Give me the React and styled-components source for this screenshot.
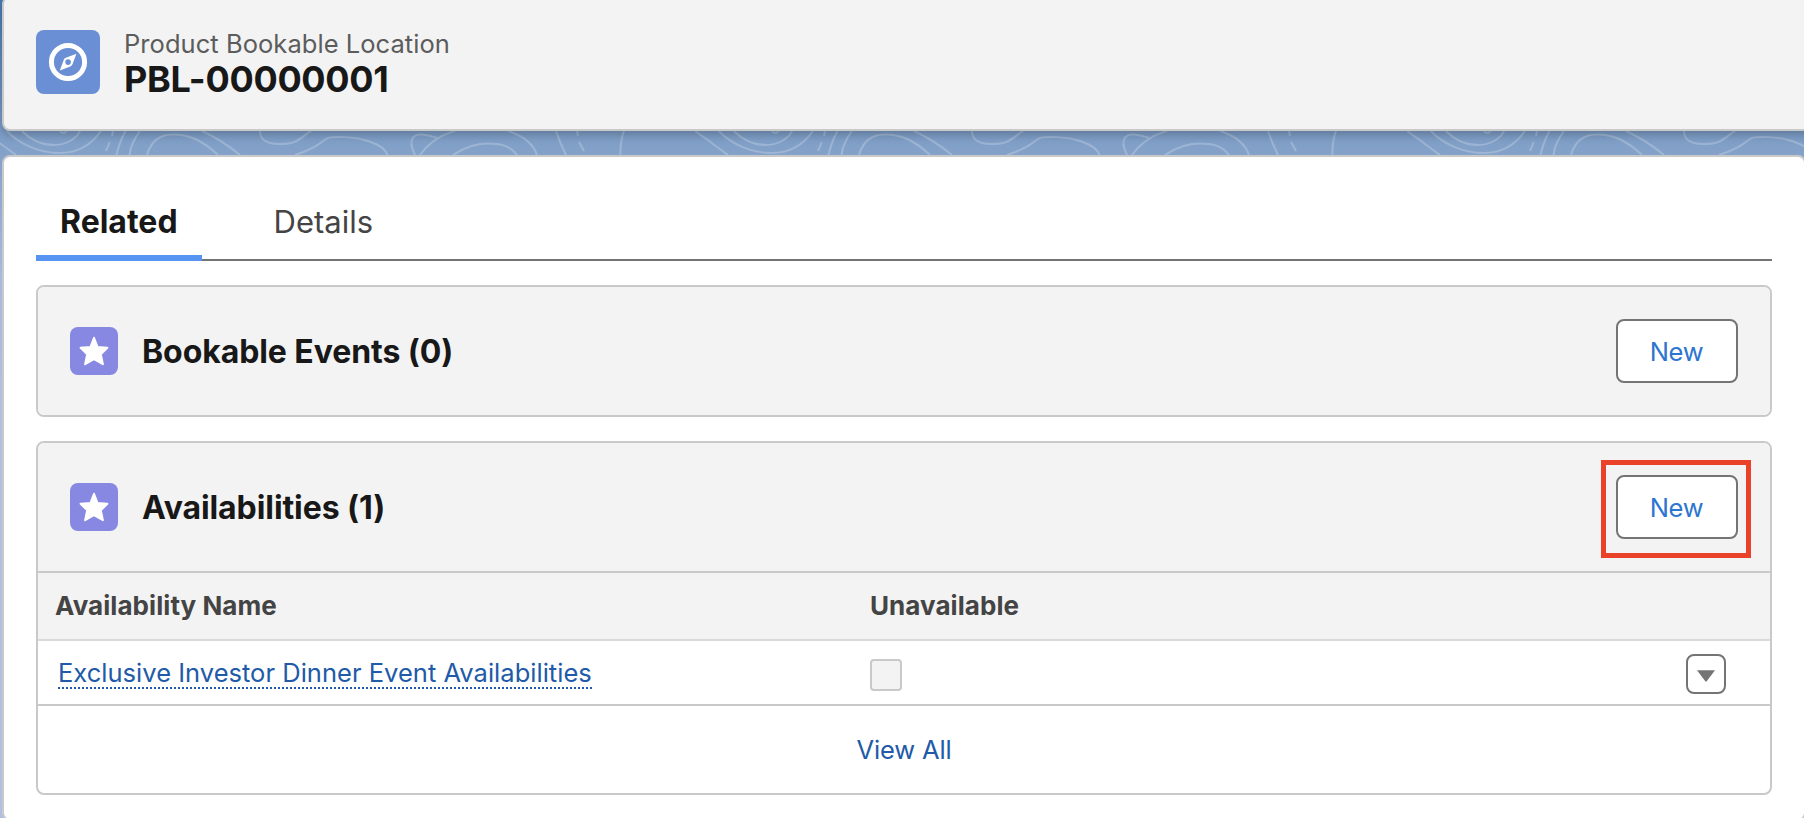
import React from 'react';
import styled, { createGlobalStyle } from 'styled-components';

const relatedLists = [
  { id: 'events', title: 'Bookable Events', records: [] },
  {
    id: 'availabilities',
    title: 'Availabilities',
    highlighted: true,
    records: [{ id: 1, name: 'Exclusive Investor Dinner Event Availabilities' }],
  },
];

const CompassIcon = () => (
  <svg width="64" height="64" viewBox="0 0 64 64" fill="none">
    <circle cx="32" cy="32" r="16.6" stroke="#fff" strokeWidth="5" />
    <path
      fill="#fff"
      fillRule="evenodd"
      d="M40.4 23.8 29.9 27.7Q28.3 28.3 27.7 29.9L23.8 40.4 34.3 36.5Q35.9 35.9 36.5 34.3ZM32.1 29.3a2.8 2.8 0 1 1 0 5.6a2.8 2.8 0 0 1 0-5.6Z"
    />
  </svg>
);

const StarIcon = () => (
  <svg width="48" height="48" viewBox="0 0 48 48">
    <path
      d="M24 10.8 27.5 19.9 37.4 20.7 30.8 27.3 32.9 37.2 24 32.2 15.1 37.2 17.2 27.3 10.6 20.7 20.5 19.9Z"
      fill="#fff"
      stroke="#fff"
      strokeWidth="2"
      strokeLinejoin="round"
    />
  </svg>
);

// topographic lines repeated every 712px
const ContourBand = () => (
  <Styled.Band width="1804" height="24" fill="none">
    <defs>
      <pattern id="contours" width="712" height="24" patternUnits="userSpaceOnUse">
        <g transform="translate(0 -6)" stroke="#fff" strokeOpacity="0.22" strokeWidth="2">
          <path d="M-17 6 16 30M695 6 729 30" />
          <path d="M5 4C18 19 39 28 60 28C78 28 92 19 101 6" />
          <path d="M22 6C32 16 42 20 54 20C66 20 76 14 80 6M60 6Q63 10 67 6" />
          <path d="M113 6 112 11M109.500 17Q108 22 106 26" />
          <path d="M125.500 6Q119 18 116.500 30M140 6Q131 18 129.500 30" />
          <path d="M147 30C151 16 160 9.500 173 9.500C190 9.500 203 16 218 30M202 6Q222 15 240 30" />
          <path d="M260 6C260 15 266 19 280 19C298 19 300 13 311 6" />
          <path d="M295 30C320 22 321 16 328 13C335 11 355 12 364 15C376 18 385 23 387.500 30" />
          <path d="M415 30C408 16 412 9 422 9.500C430 10 434 12 437 13M420 30C428 19 440 10 455 6" />
          <path d="M508 6C524 11 533 18 537 30" />
          <path d="M453 30C465 22 475 18.500 487 18.500C502 18.500 510 21 517 30" />
          <path d="M556 6C559 15 562 22 566 30M577 6 578 11M579 17 584 26" />
          <path d="M624 6Q620 17 620.500 30" />
        </g>
      </pattern>
    </defs>
    <rect width="1804" height="24" fill="url(#contours)" />
  </Styled.Band>
);

const RecordTable = ({ records }) => (
  <>
    <Styled.ColumnHeader>
      <span>Availability Name</span>
      <span>Unavailable</span>
    </Styled.ColumnHeader>
    {records.map(({ id, name }) => (
      <Styled.Row key={id}>
        <Styled.RecordLink href="#">{name}</Styled.RecordLink>
        <Styled.Checkbox />
        <Styled.MenuButton aria-label="Show actions">
          <svg width="18" height="12" viewBox="0 0 18 12">
            <path d="M0 0.300H18L9.700 11.300Q9 12.100 8.300 11.300Z" fill="#747474" />
          </svg>
        </Styled.MenuButton>
      </Styled.Row>
    ))}
    <Styled.Footer href="#">View All</Styled.Footer>
  </>
);

const RelatedList = ({ title, records, highlighted }) => (
  <Styled.List>
    <Styled.ListHeader>
      <Styled.ListIcon>
        <StarIcon />
      </Styled.ListIcon>
      <Styled.ListTitle>
        {title} ({records.length})
      </Styled.ListTitle>
      <Styled.NewButton $highlighted={highlighted}>New</Styled.NewButton>
    </Styled.ListHeader>
    {records.length > 0 && <RecordTable records={records} />}
  </Styled.List>
);

const App = () => (
  <>
    <GlobalStyle />
    <Styled.Page>
      <Styled.Header>
        <Styled.EntityIcon>
          <CompassIcon />
        </Styled.EntityIcon>
        <Styled.Heading>
          <Styled.EntityLabel>Product Bookable Location</Styled.EntityLabel>
          <Styled.RecordName>PBL-00000001</Styled.RecordName>
        </Styled.Heading>
      </Styled.Header>
      <ContourBand />
      <Styled.Card>
        <Styled.Tabs>
          <Styled.Tab $active>Related</Styled.Tab>
          <Styled.Tab>Details</Styled.Tab>
        </Styled.Tabs>
        {relatedLists.map((list) => (
          <RelatedList key={list.id} {...list} />
        ))}
      </Styled.Card>
    </Styled.Page>
  </>
);

const GlobalStyle = createGlobalStyle`
  * {
    box-sizing: border-box;
  }
  body {
    margin: 0;
    overflow: hidden;
    font-family: Inter, 'Liberation Sans', sans-serif;
    color: #181818;
  }
  h1, h2, p {
    margin: 0;
  }
  a {
    color: #205aa8;
    text-decoration: none;
  }
  svg {
    display: block;
  }
`;

const Styled = {
  Page: styled.div`
    width: 1804px;
    height: 818px;
    overflow: hidden;
    background: linear-gradient(#4778b3 0, #83a1c8 150px, #a8b7dc 270px, #b1bfe0 400px);
  `,
  Header: styled.header`
    display: flex;
    gap: 24px;
    position: relative;
    width: 1820px;
    height: 135px;
    margin: -4px 0 0 2px;
    padding: 32px;
    background: #f3f3f3;
    border: 2px solid #c9c9c9;
    border-radius: 8px;
    box-shadow: 0 4px 8px rgba(0, 0, 0, 0.22);
  `,
  EntityIcon: styled.div`
    width: 64px;
    height: 64px;
    border-radius: 8px;
    background: #6a8fd5;
  `,
  Heading: styled.div`
    margin-top: -2px;
  `,
  EntityLabel: styled.p`
    font-size: 25.5px;
    line-height: 32px;
    letter-spacing: 0.05px;
    color: #5c5c5c;
  `,
  RecordName: styled.h1`
    font-size: 36px;
    font-weight: 700;
    line-height: 38px;
    letter-spacing: -0.28px;
  `,
  Band: styled.svg`
    width: 1804px;
    height: 24px;
  `,
  Card: styled.main`
    width: 1804px;
    height: 666px;
    margin-left: 2px;
    padding: 24px 32px;
    background: #fff;
    border: 2px solid #c9c9c9;
    border-radius: 8px;
  `,
  Tabs: styled.nav`
    display: flex;
    gap: 48px;
    height: 80px;
    box-shadow: inset 0 -2px #747474;
  `,
  Tab: styled.div`
    padding: 0 24px;
    line-height: 82px;
    height: 80px;
    font-size: ${({ $active }) => ($active ? 32 : 31)}px;
    font-weight: ${({ $active }) => ($active ? 700 : 400)};
    color: ${({ $active }) => ($active ? '#181818' : '#444')};
    box-shadow: ${({ $active }) => ($active ? 'inset 0 -6px #5794f2' : 'none')};
  `,
  List: styled.section`
    margin-top: 24px;
    border: 2px solid #c9c9c9;
    border-radius: 8px;
    overflow: hidden;
  `,
  ListHeader: styled.div`
    display: flex;
    align-items: center;
    gap: 24px;
    height: 128px;
    padding: 0 32px;
    background: #f3f3f3;
  `,
  ListIcon: styled.div`
    width: 48px;
    height: 48px;
    border-radius: 8px;
    background: #8788e2;
  `,
  ListTitle: styled.h2`
    flex: 1;
    padding-top: 2px;
    font-size: 32px;
    font-weight: 700;
    line-height: 40px;
    letter-spacing: -0.08px;
  `,
  NewButton: styled.button`
    width: 122px;
    height: 64px;
    padding: 2px 1px 0 0;
    font: 400 25.5px/58px Inter, 'Liberation Sans', sans-serif;
    letter-spacing: -0.3px;
    color: #2c75d0;
    background: #fff;
    border: 2px solid #747474;
    border-radius: 8px;
    position: relative;

    &::after {
      content: '';
      display: ${({ $highlighted }) => ($highlighted ? 'block' : 'none')};
      position: absolute;
      inset: -17px -15px -21px -17px;
      border: 5px solid #ea4228;
    }
  `,
  ColumnHeader: styled.div`
    display: grid;
    grid-template-columns: 815px 1fr;
    height: 70px;
    padding-left: 17px;
    line-height: 66px;
    font-size: 26px;
    font-weight: 700;
    letter-spacing: 0.06px;
    color: #444;
    background: #f3f3f3;
    border-top: 2px solid #c9c9c9;
    border-bottom: 2px solid #dadada;
  `,
  Row: styled.div`
    display: grid;
    grid-template-columns: 812px 1fr 40px;
    align-items: center;
    height: 63px;
    padding: 0 44px 0 20px;
  `,
  RecordLink: styled.a`
    justify-self: start;
    margin-top: 3px;
    font-size: 25.5px;
    line-height: 28px;
    letter-spacing: 0.02px;
    white-space: nowrap;
    border-bottom: 2px dotted #205aa8;
  `,
  Checkbox: styled.span`
    width: 32px;
    height: 32px;
    margin-top: 5px;
    background: #f3f3f3;
    border: 2px solid #c9c9c9;
    border-radius: 4px;
  `,
  MenuButton: styled.button`
    display: grid;
    place-items: center;
    width: 40px;
    height: 40px;
    margin-top: 3px;
    padding: 4px 0 0;
    background: #fff;
    border: 2px solid #747474;
    border-radius: 8px;
  `,
  Footer: styled.a`
    display: block;
    height: 89px;
    line-height: 87px;
    font-size: 25.5px;
    letter-spacing: -0.15px;
    text-align: center;
    border-top: 2px solid #c9c9c9;
  `,
};

export default App;
